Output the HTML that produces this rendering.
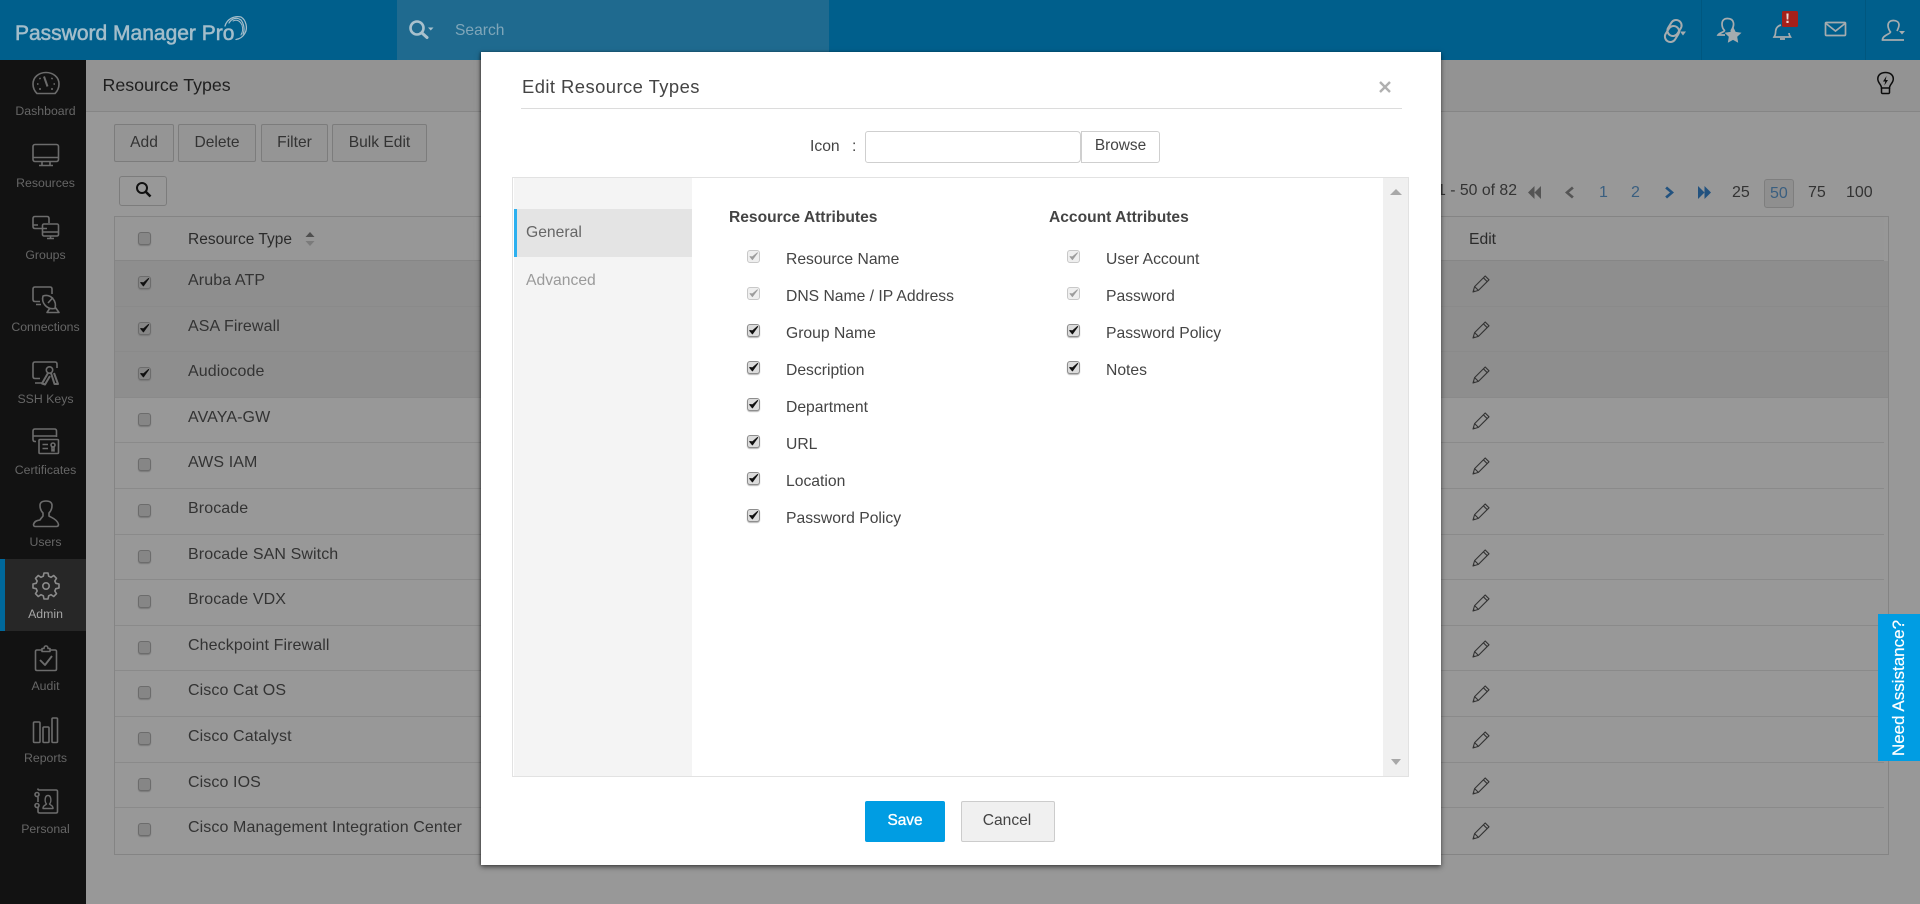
<!DOCTYPE html>
<html lang="en">
<head>
<meta charset="utf-8">
<title>Resource Types</title>
<style>
html,body{margin:0;padding:0;width:1920px;height:904px;overflow:hidden;background:#989898;font-family:"Liberation Sans",sans-serif;color:#2f2f2f}
*{box-sizing:border-box}
.t{position:absolute;white-space:nowrap;line-height:20px;height:20px}
.abs{position:absolute}
#top{left:0;top:0;width:1920px;height:60px;background:#005f8c}
#srch{left:397px;top:0;width:432px;height:60px;background:#1f6a8f}
#side{left:0;top:60px;width:86px;height:844px;background:#121212}
#act{left:0;top:559px;width:86px;height:72px;background:#272727;border-left:5px solid #00689b}
.sl{position:absolute;left:2.5px;width:86px;text-align:center;font-size:12.3px;line-height:16px;color:#666}
#band{left:86px;top:60px;width:1834px;height:52px;background:#939393;border-bottom:1px solid #858585}
.btn{position:absolute;top:124px;height:38px;border:1px solid #7c7c7c;border-radius:2px;background:#959595;text-align:center;font-size:15.6px;line-height:36px;color:#333}
#tbl{left:114px;top:216px;width:1775px;height:639px;border:1px solid #848484;border-bottom-width:1px;background:#989898}
.hdr{position:absolute;left:115px;top:217px;width:1769px;height:44px;border-bottom:1px solid #868686;background:#979797}
.row{position:absolute;left:115px;width:1769px;border-bottom:1px solid #8a8a8a}
.sel{background:#8e8e8e;width:1773px}
.row .t{left:73px;font-size:16px;letter-spacing:.1px;color:#333;top:10px}
.cb{position:absolute;left:23px;top:15px;width:13px;height:13px;background:#868686;border:1px solid #6c6c6c;border-radius:3px;box-shadow:0 1px 1px #7a7a7a}
.cb svg,.mc svg{position:absolute;left:0;top:0}
.pn{position:absolute;left:1357px;top:13px}
.pg{font-size:16px;color:#333}
#modal{left:481px;top:52px;width:960px;height:813px;background:#fff;box-shadow:0 2px 5px rgba(0,0,0,.55),-1px 0 2px rgba(0,0,0,.3)}
.m{position:absolute;white-space:nowrap;line-height:20px;height:20px;font-size:15.7px;color:#444;margin-top:1px}
.mh{font-weight:bold;font-size:15.6px;color:#444}
.mc{position:absolute;width:13px;height:13px;border:1px solid #8e8e8e;border-radius:3px;background:#dcdcdc;box-shadow:0 1px 1px #b5b5b5}
.mc.d{border-color:#c8c8c8;background:#efefef;box-shadow:none}
#na{left:1878px;top:614px;width:42px;height:147px;background:#009de3}
#na span{position:absolute;left:50%;top:50%;transform:translate(-50%,-50%) rotate(-90deg);white-space:nowrap;color:#fff;font-size:17px;line-height:20px;-webkit-text-stroke:.2px #fff}
svg{display:block}
</style>
</head>
<body>
<svg width="0" height="0" style="position:absolute">
<defs>
<symbol id="pencil" viewBox="0 0 18 19"><g fill="none" stroke="#333" stroke-width="1.1" stroke-linejoin="round"><path d="M1 18L2.6 12.6L13.2 2L17 5.8L6.4 16.4Z"/><path d="M2.6 12.6L6.4 16.4M11.4 3.8L15.2 7.6"/></g><path d="M1 18L1.5 15.8L3.2 17.4Z" fill="#333"/></symbol>
<symbol id="chk" viewBox="0 0 11 11"><path d="M1.800 5.600L4.400 8.800L9.600 1.600L4.500 5.900Z" fill="#111" stroke="#111" stroke-width="1.100" stroke-linejoin="round"/></symbol>
<symbol id="chkd" viewBox="0 0 11 11"><path d="M2 5.600L4.400 8.600L9.400 1.800L4.500 5.900Z" fill="#9d9d9d" stroke="#9d9d9d" stroke-width=".9" stroke-linejoin="round"/></symbol>
</defs>
</svg>

<div class="abs" id="top"></div>
<div class="abs" id="srch"></div>
<div class="t" style="left:455px;top:21px;font-size:15.6px;color:#7fa6b9">Search</div>
<div class="t" style="left:15px;top:22px;font-size:21px;line-height:24px;height:24px;color:#a3bdca;-webkit-text-stroke:.55px #a3bdca">Password Manager Pro</div>

<div class="abs" id="side"></div>
<div class="abs" id="act"></div>
<div class="sl" style="top:103px">Dashboard</div>
<div class="sl" style="top:175px">Resources</div>
<div class="sl" style="top:247px">Groups</div>
<div class="sl" style="top:319px">Connections</div>
<div class="sl" style="top:391px">SSH Keys</div>
<div class="sl" style="top:462px">Certificates</div>
<div class="sl" style="top:534px">Users</div>
<div class="sl" style="top:606px;color:#a5a5a5">Admin</div>
<div class="sl" style="top:678px">Audit</div>
<div class="sl" style="top:750px">Reports</div>
<div class="sl" style="top:821px">Personal</div>

<div class="abs" id="band"></div>
<div class="t" style="left:102.500px;top:75px;font-size:17.8px;color:#1f1f1f">Resource Types</div>

<div class="btn" style="left:114px;width:60px">Add</div>
<div class="btn" style="left:178px;width:78px">Delete</div>
<div class="btn" style="left:261px;width:67px">Filter</div>
<div class="btn" style="left:332px;width:95px">Bulk Edit</div>
<div class="btn" style="left:119px;top:176px;width:48px;height:30px;border-radius:3px;background:#989898"></div>

<div class="abs" id="tbl"></div>
<div class="hdr"></div>
<div class="cb abs" style="left:138px;top:232px"></div>
<div class="t" style="left:188px;top:230px;font-size:15.5px;color:#2b2b2b">Resource Type</div>
<div class="t" style="left:1469px;top:230px;font-size:15.7px;color:#2b2b2b">Edit</div>

<div class="row sel" style="top:261px;height:46px"><span class="cb"><svg width="11" height="11"><use href="#chk"/></svg></span><span class="t">Aruba ATP</span><svg class="pn" width="18" height="19"><use href="#pencil"/></svg></div>
<div class="row sel" style="top:307px;height:45px"><span class="cb"><svg width="11" height="11"><use href="#chk"/></svg></span><span class="t">ASA Firewall</span><svg class="pn" width="18" height="19"><use href="#pencil"/></svg></div>
<div class="row sel" style="top:352px;height:46px"><span class="cb"><svg width="11" height="11"><use href="#chk"/></svg></span><span class="t">Audiocode</span><svg class="pn" width="18" height="19"><use href="#pencil"/></svg></div>
<div class="row" style="top:398px;height:45px"><span class="cb"></span><span class="t">AVAYA-GW</span><svg class="pn" width="18" height="19"><use href="#pencil"/></svg></div>
<div class="row" style="top:443px;height:46px"><span class="cb"></span><span class="t">AWS IAM</span><svg class="pn" width="18" height="19"><use href="#pencil"/></svg></div>
<div class="row" style="top:489px;height:46px"><span class="cb"></span><span class="t">Brocade</span><svg class="pn" width="18" height="19"><use href="#pencil"/></svg></div>
<div class="row" style="top:535px;height:45px"><span class="cb"></span><span class="t">Brocade SAN Switch</span><svg class="pn" width="18" height="19"><use href="#pencil"/></svg></div>
<div class="row" style="top:580px;height:46px"><span class="cb"></span><span class="t">Brocade VDX</span><svg class="pn" width="18" height="19"><use href="#pencil"/></svg></div>
<div class="row" style="top:626px;height:45px"><span class="cb"></span><span class="t">Checkpoint Firewall</span><svg class="pn" width="18" height="19"><use href="#pencil"/></svg></div>
<div class="row" style="top:671px;height:46px"><span class="cb"></span><span class="t">Cisco Cat OS</span><svg class="pn" width="18" height="19"><use href="#pencil"/></svg></div>
<div class="row" style="top:717px;height:46px"><span class="cb"></span><span class="t">Cisco Catalyst</span><svg class="pn" width="18" height="19"><use href="#pencil"/></svg></div>
<div class="row" style="top:763px;height:45px"><span class="cb"></span><span class="t">Cisco IOS</span><svg class="pn" width="18" height="19"><use href="#pencil"/></svg></div>
<div class="row" style="top:808px;height:46px;border-bottom:0"><span class="cb"></span><span class="t">Cisco Management Integration Center</span><svg class="pn" width="18" height="19"><use href="#pencil"/></svg></div>

<!-- pagination -->
<div class="t pg" style="right:403px;top:181px;font-size:15.8px">1 - 50 of 82</div>
<div class="t pg" style="left:1599px;top:183px;color:#3a5f80">1</div>
<div class="t pg" style="left:1631px;top:183px;color:#3a5f80">2</div>
<div class="t pg" style="left:1732px;top:183px">25</div>
<div class="abs" style="left:1764px;top:179px;width:30px;height:29px;border:1px solid #7e7e7e;border-radius:3px;background:#8f8f8f"></div>
<div class="t pg" style="left:1770px;top:184px;color:#3a5f80">50</div>
<div class="t pg" style="left:1808px;top:183px">75</div>
<div class="t pg" style="left:1846px;top:183px">100</div>

<!-- icons layer -->
<svg class="abs" style="left:0;top:0" width="1920" height="904" viewBox="0 0 1920 904">
 <!-- logo swoosh -->
 <g fill="none" stroke="#a3bdca" stroke-linecap="round">
  <path d="M225 26C227 19 234 15.500 241 17C246 20 248 28 245 33C243 37 239 39 236 39.500" stroke-width="1.300"/>
  <path d="M229 23C232 18 237 17 241 20C244 24 245 30 243 34" stroke-width="1.200"/>
  <path d="M233 21C237 19 240 21 242 25C243 29 243 31 241 35" stroke-width="1"/>
 </g>
 <!-- top search -->
 <g fill="none" stroke="#a9c1cd" stroke-width="2.600">
  <circle cx="417" cy="28" r="6.500"/><path d="M422 33L427 37.500" stroke-width="3" stroke-linecap="round"/>
 </g>
 <path d="M428 27.500h5.500l-2.750 3z" fill="#a9c1cd"/>
 <!-- top right -->
 <path d="M1701.500 0V60M1865.500 0V60" stroke="#00577f" stroke-width="1"/>
 <g fill="none" stroke="#a6acaf" stroke-width="2">
  <rect x="1669" y="19.500" width="11" height="17" rx="5.500" transform="rotate(32 1674.500 28)"/>
  <rect x="1666.500" y="25.500" width="11" height="17" rx="5.500" transform="rotate(32 1672 34)"/>
 </g>
 <path d="M1680 31.500h6l-3 4z" fill="#a6acaf"/>
 <g fill="none" stroke="#a6acaf" stroke-width="1.700">
  <path d="M1731 31C1733 28 1734 26 1733.500 23C1733 20 1731 18.500 1727.500 18.500C1724 18.500 1722 20.500 1722 24C1722 27 1723 29 1724.500 30.500C1724.500 32 1719 33 1718 35L1725 35"/>
  <path d="M1781 25C1777 26 1775.500 29 1775.500 33C1775.500 35 1774.500 36 1774 37H1790.500C1790 36 1789 35 1789 33M1780 39H1785"/>
  <rect x="1825.500" y="22.500" width="20" height="13" rx="1"/><path d="M1826 23.500L1835.500 31L1845 23.500"/>
  <path d="M1897 31C1898 29 1899 27 1899 25C1899 22 1896.500 20.500 1893.500 20.500C1890 20.500 1888 22.500 1888 25.500C1888 28 1889.500 31 1890.500 32C1890.500 34 1883 35 1882.500 39.500V40H1904"/>
 </g>
 <path d="M1733 26.500l2.600 5.400 5.900.8-4.300 4.100 1 5.900-5.200-2.800-5.200 2.800 1-5.900-4.300-4.100 5.900-.8z" fill="#a6acaf"/>
 <rect x="1782" y="11" width="16" height="16" rx="1.500" fill="#a5201a"/>
 <path d="M1786.400 13.500h2.200l-.3 6h-1.600zM1786.400 20.800h2.200v2.200h-2.200z" fill="#e8d8d6"/>
 <path d="M1899 31h6l-3 3.500z" fill="#a6acaf"/>
 <!-- bulb -->
 <g fill="none" stroke="#0c0c0c" stroke-width="1.500">
  <path d="M1881.500 88C1881.500 84.500 1877.800 83 1877.800 79C1877.800 74.700 1881.200 72.500 1885.500 72.500C1889.800 72.500 1893.300 74.700 1893.300 79C1893.300 83 1889.500 84.500 1889.500 88Z"/>
  <path d="M1881.500 88V92.500C1881.500 93 1882 93.500 1882.500 93.500H1888.500C1889 93.500 1889.500 93 1889.500 92.500V88"/>
 </g>
 <path d="M1886.500 76L1883 81.500H1885.300L1884.300 85.500L1888 80H1885.700Z" fill="#0c0c0c"/>
 <!-- sidebar -->
 <g fill="none" stroke="#6c6c6c" stroke-width="1.600" stroke-linejoin="round">
  <path d="M37 93.500C34.500 91 33 87.500 33 84C33 77 39 72.500 46 72.500C53 72.500 59 77 59 84C59 87.500 57.500 91 55 93.500Z"/>
  <path d="M44 76.500L47.500 86.500" stroke-width="2"/>
  <path d="M37 84H38.500M53.500 84H55M39.500 78L40.500 79M52.500 78L51.500 79M39 89H41M51 89H53"/>
  <rect x="33" y="144.500" width="25.500" height="17" rx="2"/><path d="M33 157.500H58.500M42 161.500V165.500M50 161.500V165.500M39 165.500H53"/>
  <path d="M47 228.500H35C33.700 228.500 33 227.800 33 226.500V218.500C33 217.300 33.700 216.500 35 216.500H47C48.300 216.500 49 217.300 49 218.500V223"/>
  <rect x="42.500" y="224" width="16" height="12" rx="1.500"/><path d="M42.500 232H58.500M47 238.500H54M50.500 236V238.500M33 225H38"/>
  <path d="M40 301.500H35C33.700 301.500 33 300.800 33 299.500V289C33 287.700 33.700 287 35 287H50C51.300 287 52 287.700 52 289V294M36 304.500H41"/>
  <path d="M43 296C41 303 47 310 55 308.500C57 301 51 293.500 43 296ZM50 308L47 312.500H59L55 307"/><path d="M48 303L53 297.500"/>
  <path d="M40 378.500H35C33.700 378.500 33 377.800 33 376.500V364C33 362.700 33.700 362 35 362H55C56.300 362 57 362.700 57 364V368M35 383H43"/>
  <circle cx="49.500" cy="370" r="3.200"/><path d="M48 373L42 383.500L45 384.500L50 376M51 373L54.500 384H58L54 373" stroke-width="2"/>
  <path d="M36 441.500H35C33.700 441.500 33 441 33 439.500V431C33 429.700 33.700 429 35 429H54.500C55.800 429 56.500 429.700 56.500 431V437"/>
  <path d="M33 436H56" stroke-width="1.400"/>
  <rect x="39" y="439.500" width="19.500" height="14" rx="1"/><path d="M42.500 444.500H48M42.500 448.500H48"/><circle cx="53" cy="445" r="2"/><path d="M52 447V451L53 450L54 451V447"/>
  <path d="M40 520C41 518 42.500 517 43 516V513C41 511 40 508.500 40 505.500C40 502 42.500 501 46 501C49.500 501 52 502 52 505.500C52 508.500 51 511 49 513V516C50 517 57.500 519 58.500 524.500C58.500 526 57.800 526.500 56.500 526.500H35.500C34 526.500 33.500 526 33.500 524.500C34.500 521 37 520.500 40 520Z"/>
  <g transform="translate(0 26.500)" stroke="#8b8b8b">
   <path d="M44 546.500H48L48.700 549.700L51 550.800L53.700 549L56.500 551.800L54.800 554.500L55.800 556.800L59 557.500V561.500L55.800 562.200L54.800 564.500L56.500 567.200L53.700 570L51 568.200L48.700 569.300L48 572.500H44L43.300 569.300L41 568.200L38.300 570L35.500 567.200L37.200 564.500L36.200 562.200L33 561.500V557.500L36.200 556.800L37.200 554.500L35.500 551.800L38.300 549L41 550.800L43.300 549.700Z"/>
   <circle cx="46" cy="559.500" r="3.200"/>
  </g>
  <path d="M42 650H37C36 650 35.500 650.500 35.500 651.500V669C35.500 670 36 670.500 37 670.500H55C56 670.500 56.500 670 56.500 669V651.500C56.500 650.500 56 650 55 650H50M42 651.500V648.500H44C44 645 48 645 48 648.500H50V651.500Z"/>
  <path d="M40 660L45 665L52 656" stroke-width="1.900"/>
  <rect x="33.500" y="722" width="6.500" height="20.500" rx="1"/><rect x="43" y="727" width="6" height="15.500" rx="1"/><rect x="52" y="718" width="5.500" height="24.500" rx="1"/>
  <path d="M38 790V789C38 790 38.500 790 40 790H56C57 790 57.500 790.500 57.500 791.500V811.500C57.500 812.500 57 813 56 813H40C38.500 813 38 812.500 38 811.500V807M38 797V802"/>
  <circle cx="37" cy="794.500" r="2"/><circle cx="37" cy="805.500" r="2"/>
  <path d="M43 808.500C43 805 45.500 805.500 46.500 804C44.500 802 44.500 795.500 48 795.500C51.500 795.500 51.500 802 49.500 804C50.500 805.500 53 805 53 808.500Z" stroke-width="1.400"/>
 </g>
 <!-- search btn icon -->
 <g fill="none" stroke="#111" stroke-width="2"><circle cx="142" cy="188" r="5"/><path d="M146 192L150.500 196.500" stroke-width="2.600"/></g>
 <!-- sort -->
 <path d="M305.500 237L310 232L314.500 237Z" fill="#4f4f4f"/><path d="M305.500 241L310 246L314.500 241Z" fill="#7b7b7b"/>
 <!-- pager arrows -->
 <g fill="#555"><path d="M1534.500 186L1528 192.500L1534.500 199Z"/><path d="M1541 186L1534.500 192.500L1541 199Z"/><path d="M1572 186.500L1565 192.500L1572 198.500L1573.800 196.500L1569 192.500L1573.800 188.500Z"/></g>
 <g fill="#22527f"><path d="M1667 186.500L1674 192.500L1667 198.500L1665.200 196.500L1670 192.500L1665.200 188.500Z"/><path d="M1698 186L1704.500 192.500L1698 199Z"/><path d="M1704.500 186L1711 192.500L1704.500 199Z"/></g>
</svg>

<!-- modal -->
<div class="abs" id="modal">
 <div class="m" style="left:41px;top:24px;font-size:18.4px;letter-spacing:.45px;color:#444">Edit Resource Types</div>
 <div class="abs" style="left:40px;top:56px;width:881px;height:1px;background:#dcdcdc"></div>
 <svg class="abs" style="left:898px;top:29px" width="12" height="12"><path d="M1 1L11 11M11 1L1 11" stroke="#b0b0b0" stroke-width="2.400"/></svg>
 <div class="m" style="left:329px;top:84px">Icon</div>
 <div class="m" style="left:371px;top:84px">:</div>
 <div class="abs" style="left:384px;top:79px;width:216px;height:32px;border:1px solid #cfcfcf;border-radius:3px 4px 4px 3px;background:#fff"></div>
 <div class="abs" style="left:600px;top:79px;width:79px;height:32px;border:1px solid #cfcfcf;border-radius:0 3px 3px 0;background:#fff;text-align:center;font-size:15.4px;line-height:27px;color:#444">Browse</div>

 <div class="abs" style="left:31px;top:125px;width:897px;height:600px;border:1px solid #e2e2e2;background:#fff"></div>
 <div class="abs" style="left:33px;top:126px;width:178px;height:598px;background:#f4f4f4"></div>
 <div class="abs" style="left:33px;top:157px;width:178px;height:48px;background:#e4e4e4;border-left:3px solid #2db0ef"></div>
 <div class="m" style="left:45px;top:170px;color:#666">General</div>
 <div class="m" style="left:45px;top:218px;color:#9a9a9a">Advanced</div>
 <div class="abs" style="left:902px;top:126px;width:25px;height:598px;background:#f0f0f0"></div>
 <svg class="abs" style="left:908px;top:136px" width="14" height="8"><path d="M1 7L7 1L13 7Z" fill="#a8a8a8"/></svg>
 <svg class="abs" style="left:908px;top:706px" width="14" height="8"><path d="M2 1H12L7 7Z" fill="#a8a8a8"/></svg>

 <div class="m mh" style="left:248px;top:155px">Resource Attributes</div>
 <div class="m mh" style="left:568px;top:155px">Account Attributes</div>

 <div class="mc d" style="left:266px;top:198px"><svg width="11" height="11"><use href="#chkd"/></svg></div><div class="m" style="left:305px;top:197px">Resource Name</div>
 <div class="mc d" style="left:266px;top:235px"><svg width="11" height="11"><use href="#chkd"/></svg></div><div class="m" style="left:305px;top:234px">DNS Name / IP Address</div>
 <div class="mc" style="left:266px;top:272px"><svg width="11" height="11"><use href="#chk"/></svg></div><div class="m" style="left:305px;top:271px">Group Name</div>
 <div class="mc" style="left:266px;top:309px"><svg width="11" height="11"><use href="#chk"/></svg></div><div class="m" style="left:305px;top:308px">Description</div>
 <div class="mc" style="left:266px;top:346px"><svg width="11" height="11"><use href="#chk"/></svg></div><div class="m" style="left:305px;top:345px">Department</div>
 <div class="mc" style="left:266px;top:383px"><svg width="11" height="11"><use href="#chk"/></svg></div><div class="m" style="left:305px;top:382px">URL</div>
 <div class="mc" style="left:266px;top:420px"><svg width="11" height="11"><use href="#chk"/></svg></div><div class="m" style="left:305px;top:419px">Location</div>
 <div class="mc" style="left:266px;top:457px"><svg width="11" height="11"><use href="#chk"/></svg></div><div class="m" style="left:305px;top:456px">Password Policy</div>

 <div class="mc d" style="left:586px;top:198px"><svg width="11" height="11"><use href="#chkd"/></svg></div><div class="m" style="left:625px;top:197px">User Account</div>
 <div class="mc d" style="left:586px;top:235px"><svg width="11" height="11"><use href="#chkd"/></svg></div><div class="m" style="left:625px;top:234px">Password</div>
 <div class="mc" style="left:586px;top:272px"><svg width="11" height="11"><use href="#chk"/></svg></div><div class="m" style="left:625px;top:271px">Password Policy</div>
 <div class="mc" style="left:586px;top:309px"><svg width="11" height="11"><use href="#chk"/></svg></div><div class="m" style="left:625px;top:308px">Notes</div>

 <div class="abs" style="left:384px;top:749px;width:80px;height:41px;background:#009de3;border-radius:2px;text-align:center;color:#fff;font-size:15.4px;line-height:39px;-webkit-text-stroke:.35px #fff">Save</div>
 <div class="abs" style="left:480px;top:749px;width:94px;height:41px;background:#f0f0f0;border:1px solid #ccc;border-radius:2px;text-align:center;color:#444;font-size:15.6px;line-height:37px;padding-right:2px">Cancel</div>
</div>

<div class="abs" id="na"><span>Need Assistance?</span></div>
</body>
</html>
